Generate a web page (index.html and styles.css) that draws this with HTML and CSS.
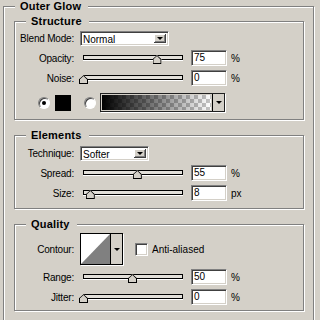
FILE: index.html
```html
<!DOCTYPE html>
<html lang="en">
<head>
  <meta charset="UTF-8">
  <title>Outer Glow</title>
  <link rel="stylesheet" href="styles.css">
</head>
<body>
  <fieldset class="panel">
    <legend>Outer Glow</legend>

    <fieldset class="group structure">
      <legend>Structure</legend>
      <div class="row short">
        <span class="lbl">Blend Mode:</span>
        <div class="select wide"><span class="val">Normal</span><span class="drop"><i class="arrow"></i></span></div>
      </div>
      <div class="row">
        <span class="lbl">Opacity:</span>
        <div class="slider"><div class="track"><span class="thumb" style="left: 75%"></span></div></div>
        <span class="num">75</span><span class="unit">%</span>
      </div>
      <div class="row">
        <span class="lbl">Noise:</span>
        <div class="slider"><div class="track"><span class="thumb" style="left: 0%"></span></div></div>
        <span class="num">0</span><span class="unit">%</span>
      </div>
      <div class="row colors">
        <span class="radio on"></span>
        <span class="swatch"></span>
        <span class="radio second"></span>
        <div class="grad"><span class="grad-fill"></span><span class="drop flat"><i class="arrow"></i></span></div>
      </div>
    </fieldset>

    <fieldset class="group elements">
      <legend>Elements</legend>
      <div class="row short">
        <span class="lbl">Technique:</span>
        <div class="select narrow"><span class="val">Softer</span><span class="drop"><i class="arrow"></i></span></div>
      </div>
      <div class="row">
        <span class="lbl">Spread:</span>
        <div class="slider"><div class="track"><span class="thumb" style="left: 55%"></span></div></div>
        <span class="num">55</span><span class="unit">%</span>
      </div>
      <div class="row">
        <span class="lbl">Size:</span>
        <div class="slider"><div class="track"><span class="thumb" style="left: 7%"></span></div></div>
        <span class="num">8</span><span class="unit">px</span>
      </div>
    </fieldset>

    <fieldset class="group quality">
      <legend>Quality</legend>
      <div class="row tall">
        <span class="lbl">Contour:</span>
        <div class="contour">
          <svg width="29" height="30" viewBox="0 0 29 30">
            <rect width="29" height="30" fill="#fff"/>
            <polygon points="0,30 29,0 29,30" fill="#808080"/>
          </svg>
          <span class="drop flat"><i class="arrow"></i></span>
        </div>
        <span class="check"></span>
        <span class="check-lbl">Anti-aliased</span>
      </div>
      <div class="row">
        <span class="lbl">Range:</span>
        <div class="slider"><div class="track"><span class="thumb" style="left: 50%"></span></div></div>
        <span class="num">50</span><span class="unit">%</span>
      </div>
      <div class="row">
        <span class="lbl">Jitter:</span>
        <div class="slider"><div class="track"><span class="thumb" style="left: 0%"></span></div></div>
        <span class="num">0</span><span class="unit">%</span>
      </div>
    </fieldset>
  </fieldset>
</body>
</html>
```

FILE: styles.css
```css
body {
  margin: 0;
  background: #d4d0c8;
  font-family: "Liberation Sans", Arial, sans-serif;
  font-size: 10px;
  color: #000;
  overflow: hidden;
}
fieldset {
  margin: 0;
  min-width: 0;
  border: 1px solid #808080;
  box-shadow: 1px 1px 0 #fff, inset 1px 1px 0 #fff;
}
legend {
  font-size: 11px;
  font-weight: bold;
  line-height: 13px;
  letter-spacing: 0.2px;
  padding: 0 7px 0 5px;
  background: #d4d0c8;
}
.panel {
  margin-left: 3px;
  width: 311px;
  box-sizing: border-box;
  padding: 2px 9px 14px 10px;
}
.panel > legend {
  margin-left: 1px;
}
.group {
  margin-top: 9px;
}
.group legend {
  margin-left: 11px;
}
.structure {
  margin-top: 0;
  padding: 3px 0 7px;
}
.elements {
  padding: 4px 0 7px;
}
.quality {
  padding: 2px 0 5px;
}
.row {
  display: flex;
  align-items: center;
  height: 16px;
  margin-top: 4px;
}
legend + .row {
  margin-top: 0;
}
.row.short {
  height: 15px;
}
.row.tall {
  height: 32px;
}
.row.colors {
  height: 19px;
  margin-top: 7px;
  padding-left: 23px;
}
.lbl {
  flex: none;
  width: 59px;
  margin-right: 6px;
  text-align: right;
  letter-spacing: -0.2px;
}

/* sunken white boxes */
.select, .num, .check {
  box-sizing: border-box;
  background: #fff;
  border: 1px solid;
  border-color: #808080 #fff #fff #808080;
  box-shadow: inset 1px 1px 0 #404040, inset -1px -1px 0 #d4d0c8;
}
.select {
  display: flex;
  height: 15px;
  padding: 2px;
}
.select.wide {
  width: 89px;
}
.select.narrow {
  width: 69px;
}
.select .val {
  flex: 1;
  line-height: 11px;
}
.drop {
  width: 12px;
  display: flex;
  align-items: center;
  justify-content: center;
  background: #d4d0c8;
  box-shadow: inset -1px -1px 0 #404040, inset 1px 1px 0 #fff, inset -2px -2px 0 #808080;
}
.drop.flat {
  box-shadow: none;
  border-left: 1px solid #000;
}
.arrow {
  width: 0;
  height: 0;
  border-top: 3px solid #000;
  border-left: 3px solid transparent;
  border-right: 3px solid transparent;
}
.slider {
  width: 100px;
  height: 16px;
  margin: 0 3px;
  padding-top: 5px;
  box-sizing: border-box;
}
.track {
  position: relative;
  height: 5px;
  box-sizing: border-box;
  border: 1px solid #000;
  background: #e2dfd9;
  box-shadow: 0 1px 0 #fff;
}
.thumb {
  position: absolute;
  top: -1px;
  margin-left: -5px;
  width: 9px;
  height: 9px;
  background: #d4d0c8;
  clip-path: polygon(50% 0, 100% 45%, 100% 100%, 0 100%, 0 45%);
}
.thumb::before {
  content: "";
  position: absolute;
  inset: 0;
  background: #000;
  clip-path: polygon(50% 0, 100% 45%, 100% 100%, 0 100%, 0 45%, 11% 48%, 11% 89%, 89% 89%, 89% 50%, 50% 12%, 11% 48%, 0 45%);
}
.num {
  width: 36px;
  height: 16px;
  margin-left: 5px;
  padding-left: 2px;
  line-height: 14px;
}
.unit {
  margin-left: 4px;
}
.radio {
  position: relative;
  flex: none;
  width: 12px;
  height: 12px;
  box-sizing: border-box;
  border-radius: 50%;
  border: 1px solid;
  border-color: #808080 #fff #fff #808080;
  box-shadow: inset 1px 1px 0 #404040;
  background: #fff;
}
.radio.on::after {
  content: "";
  position: absolute;
  left: 3px;
  top: 3px;
  width: 4px;
  height: 4px;
  border-radius: 50%;
  background: #000;
}
.swatch {
  width: 16px;
  height: 16px;
  margin-left: 5px;
  background: #000;
}
.radio.second {
  margin-left: 13px;
}
.grad {
  display: flex;
  width: 125px;
  height: 19px;
  box-sizing: border-box;
  margin-left: 4px;
  border: 1px solid #202020;
  box-shadow: 1px 1px 0 #fff;
  background: #d4d0c8;
}
.grad-fill {
  flex: 1;
  margin: 1px;
  background:
    linear-gradient(to right, #000, rgba(0, 0, 0, 0)),
    conic-gradient(#c4c4c4 25%, #fff 0 50%, #c4c4c4 0 75%, #fff 0) 0 0 / 8px 8px;
}
.grad .drop {
  width: 11px;
}
.contour {
  display: flex;
  width: 43px;
  height: 32px;
  box-sizing: border-box;
  border: 1px solid #000;
  box-shadow: 1px 1px 0 #fff;
}
.contour svg {
  display: block;
}
.contour .drop {
  flex: 1;
}
.check {
  width: 13px;
  height: 13px;
  margin-left: 12px;
}
.check-lbl {
  margin-left: 4px;
}
```
